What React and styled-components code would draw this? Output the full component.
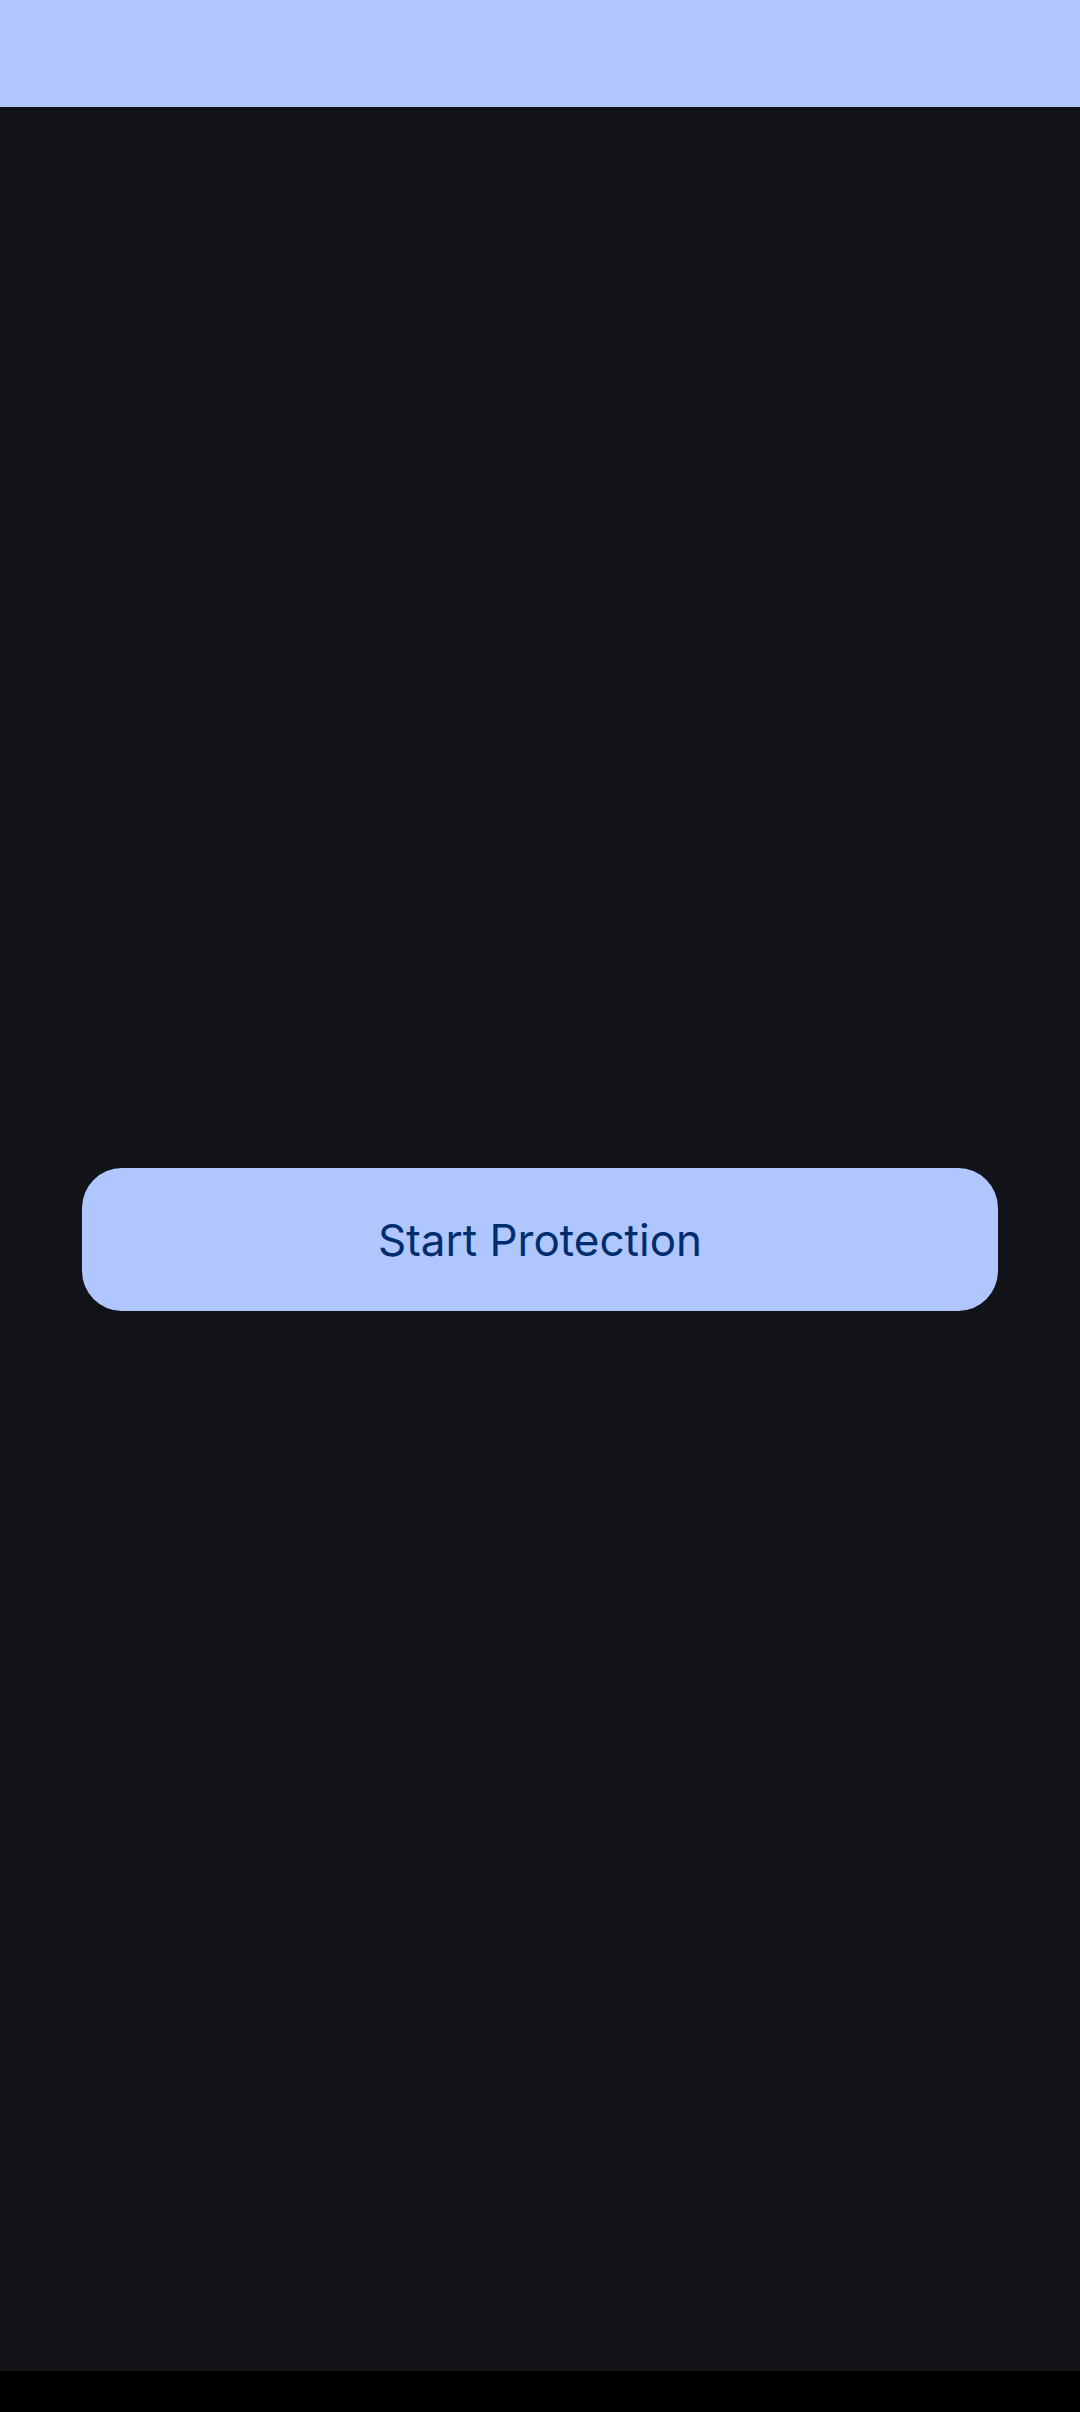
import React from 'react'
import styled, { createGlobalStyle } from 'styled-components'

const Global = createGlobalStyle`
    html, body {
        margin: 0;
        padding: 0;
        background: #111318;
    }
    * {
        box-sizing: border-box;
    }
`

const Screen = styled.div`
    display: flex;
    flex-direction: column;
    width: 1080px;
    height: 2412px;
    background: #111318;
    font-family: Inter, 'Noto Sans', sans-serif;
`

const TopBar = styled.header`
    height: 107px;
    flex-shrink: 0;
    background: #b0c6ff;
`

const Main = styled.main`
    flex: 1;
    display: flex;
    align-items: center;
    justify-content: center;
    padding: 0 82px;
`

const PrimaryButton = styled.button`
    width: 100%;
    height: 143px;
    border: none;
    border-radius: 40px;
    background: #b0c6ff;
    color: #002d6e;
    font-family: inherit;
    font-size: 44px;
    font-weight: 400;
    line-height: 1;
    padding: 2px 0 0;
    cursor: pointer;
`

const NavBar = styled.footer`
    height: 41px;
    flex-shrink: 0;
    background: #000;
`

export default function App() {
    return (
        <>
            <Global />
            <Screen>
                <TopBar />
                <Main>
                    <PrimaryButton>Start Protection</PrimaryButton>
                </Main>
                <NavBar />
            </Screen>
        </>
    )
}
